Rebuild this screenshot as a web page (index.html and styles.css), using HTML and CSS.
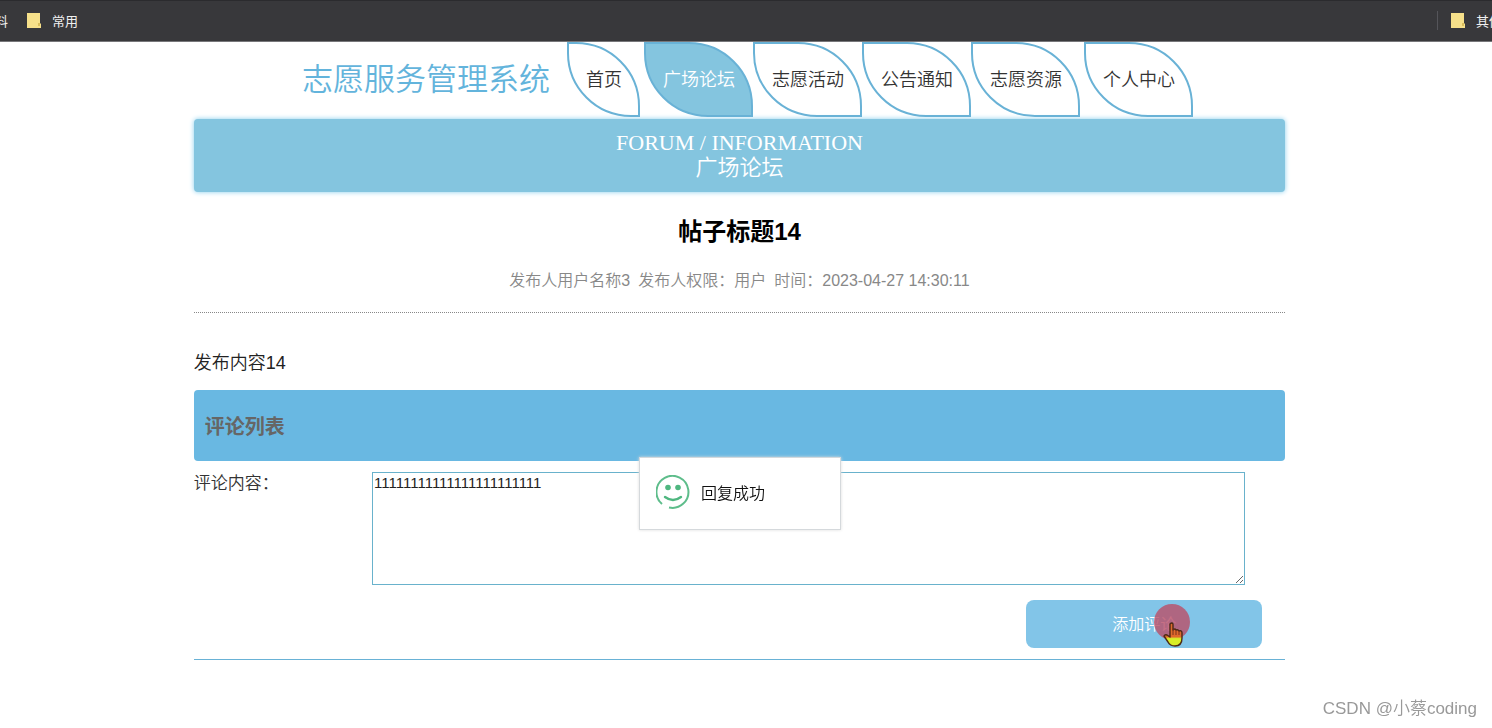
FILE: index.html
```
<!DOCTYPE html>
<html lang="zh-CN">
<head>
<meta charset="utf-8">
<title>志愿服务管理系统</title>
<link rel="stylesheet" href="styles.css">
</head>
<body>
<div class="bookmarks">
  <span class="bookmark-cut"><span>料</span></span>
  <a class="bookmark" href="#"><svg class="folder" viewBox="0 0 14 16" aria-hidden="true"><path d="M0 1h13v10l1 1v4H0z" fill="#f6e08a"/><path d="M11 11h2v3h-2z" fill="#d9bd5c"/></svg>常用</a>
  <span class="bookmark-other"><a class="bookmark" href="#"><svg class="folder" viewBox="0 0 14 16" aria-hidden="true"><path d="M0 1h13v10l1 1v4H0z" fill="#f6e08a"/><path d="M11 11h2v3h-2z" fill="#d9bd5c"/></svg>其他</a></span>
</div>
<div class="page">
  <header class="site-header">
    <div class="brand">志愿服务管理系统</div>
    <nav class="nav">
      <a class="nav-item nav-home" href="#">首页</a>
      <a class="nav-item active" href="#">广场论坛</a>
      <a class="nav-item" href="#">志愿活动</a>
      <a class="nav-item" href="#">公告通知</a>
      <a class="nav-item" href="#">志愿资源</a>
      <a class="nav-item nav-user" href="#">个人中心</a>
    </nav>
  </header>
  <main class="container">
    <div class="banner"><div>FORUM / INFORMATION</div><div>广场论坛</div></div>
    <h1 class="post-title">帖子标题14</h1>
    <div class="meta"><span>发布人用户名称3</span><span>发布人权限：用户</span><span>时间：2023-04-27 14:30:11</span></div>
    <p class="post-body">发布内容14</p>
    <h2 class="comments-title">评论列表</h2>
    <form class="comment-form">
      <div class="field">
        <label class="label" for="comment">评论内容：</label>
        <textarea class="comment" id="comment">11111111111111111111111</textarea>
      </div>
      <div class="actions">
        <button class="submit" type="button">添加评论</button>
        <svg class="pointer" viewBox="0 0 36 46" aria-hidden="true">
          <defs><linearGradient id="hand" x1="0" y1="0" x2="0" y2="1"><stop offset=".6" stop-color="#e06a2c"/><stop offset=".68" stop-color="#d8ee28"/></linearGradient></defs>
          <circle cx="18" cy="18" r="18" fill="#b9506a" fill-opacity=".82"/>
          <path d="M16 20q2-2 3 0v6q2-2 3 0 2-1 3 1 3-1 3 2v5q0 8-7 8-5 0-7-4l-4-6q1-2 3-1l3 2z" fill="url(#hand)" stroke="#4d2a16" stroke-width="1.4" stroke-linejoin="round"/>
          <path d="M19 25v6M22 26v5M25 27v4" stroke="#7c301a" fill="none"/>
        </svg>
      </div>
    </form>
  </main>
</div>
<div class="toast" role="status">
  <svg class="smile" viewBox="0 0 34 34" aria-hidden="true">
    <path d="M6 29A16 16 0 1 1 13 32.500" fill="none" stroke="#5ebd8b" stroke-width="2"/>
    <circle cx="12" cy="12.500" r="2.800" fill="#4fb780"/><circle cx="22" cy="12.500" r="2.800" fill="#4fb780"/>
    <path d="M9 22q8 6 16 0" fill="none" stroke="#4fb780" stroke-width="2.400" stroke-linecap="round"/>
  </svg>
  <span>回复成功</span>
</div>
<div class="watermark">CSDN @小蔡coding</div>
</body>
</html>
```
FILE: styles.css
```
* { box-sizing: border-box; }
body {
  margin: 0;
  min-height: 100vh;
  background: #fff;
  color: #333;
  font-family: "Liberation Sans", "Noto Sans CJK SC", sans-serif;
  overflow-x: hidden;
}
a { color: inherit; text-decoration: none; }
.bookmarks {
  display: flex;
  align-items: center;
  height: 42px;
  padding-bottom: 2px;
  overflow: hidden;
  background: #38383b;
  border-top: 1px solid #2b2b2e;
  border-bottom: 1px solid #77777a;
  color: #f0f0f0;
  font-size: 13px;
  white-space: nowrap;
}
.bookmark-cut { display: flex; justify-content: flex-end; width: 8px; margin-right: 19px; }
.bookmark { display: flex; align-items: center; gap: 11px; }
.folder { flex: none; width: 14px; height: 16px; }
.bookmark-other {
  flex: none;
  width: 55px;
  margin-left: auto;
  padding-left: 13px;
  border-left: 1px solid #55555a;
}
.page { padding-right: 13px; }
.site-header {
  display: flex;
  justify-content: center;
  align-items: center;
  gap: 17px;
  padding-left: 16px;
}
.brand { color: #63b4dc; font-size: 31px; line-height: 75px; font-weight: 350; }
.nav { display: flex; }
.nav-item {
  padding: 1px 16px 0 17px;
  border: 2px solid #69b2d6;
  border-radius: 0 64px 0 64px;
  font-size: 18px;
  line-height: 70px;
  font-weight: 350;
}
.nav-home { margin-right: 4px; }
.nav-user { margin-left: 4px; }
.nav-item.active { background: #84c5df; color: #fff; }
.container { width: 73.8%; margin: 2px auto 0; }
.banner {
  padding: 11px 0 12px;
  border-radius: 4px;
  background: #84c5df;
  box-shadow: 0 0 5px #84cdec;
  color: #fff;
  font: 350 22px/25px "Liberation Serif", "Noto Sans CJK SC", serif;
  text-align: center;
}
.post-title { margin: 23px 0 0; color: #000; font-size: 24px; line-height: 34px; text-align: center; }
.meta {
  display: flex;
  justify-content: center;
  gap: 8px;
  padding: 20px 0 19px;
  border-bottom: 1px dotted #888;
  color: #888;
  font-size: 16px;
  line-height: 24px;
  font-weight: 350;
}
.post-body { margin: 37px 0 14px; color: #222; font-size: 18px; line-height: 26px; font-weight: 350; }
.comments-title {
  margin: 0;
  padding: 4px 11px 0;
  border-radius: 4px;
  background: #69b8e2;
  color: #666;
  font-size: 20px;
  line-height: 67px;
}
.comment-form { padding: 11px 0; border-bottom: 1px solid #69b2d6; }
.field { display: flex; }
.label { flex: 1; font-size: 17px; line-height: 24px; font-weight: 350; }
.comment {
  display: block;
  width: 80%;
  height: 113px;
  margin-right: 40px;
  padding: 1px;
  border: 1px solid #69b2cc;
  color: #222;
  font: 15px/18px "Liberation Sans", sans-serif;
  outline: 0;
}
.actions { position: relative; display: flex; justify-content: flex-end; padding: 15px 23px 0 0; }
.submit {
  width: 236px;
  height: 48px;
  padding: 0 0 2px;
  border: 0;
  border-radius: 8px;
  background: #82c5e8;
  color: #fff;
  font: 350 16px "Liberation Sans", "Noto Sans CJK SC", sans-serif;
}
.pointer { position: absolute; right: 95px; top: 19px; width: 36px; height: 46px; }
.toast {
  position: fixed;
  left: calc(50% - 107px);
  top: 457px;
  display: flex;
  align-items: center;
  gap: 11px;
  width: 202px;
  height: 73px;
  padding: 0 16px 3px;
  border: 1px solid #d5d9dc;
  background: #fff;
  color: #111;
  font-size: 16px;
  font-weight: 350;
  box-shadow: 0 0 3px #ddd;
}
.smile { width: 34px; height: 34px; }
.watermark { position: fixed; right: 15px; bottom: 6px; color: #999; font-size: 17px; line-height: 26px; font-weight: 350; }
```
